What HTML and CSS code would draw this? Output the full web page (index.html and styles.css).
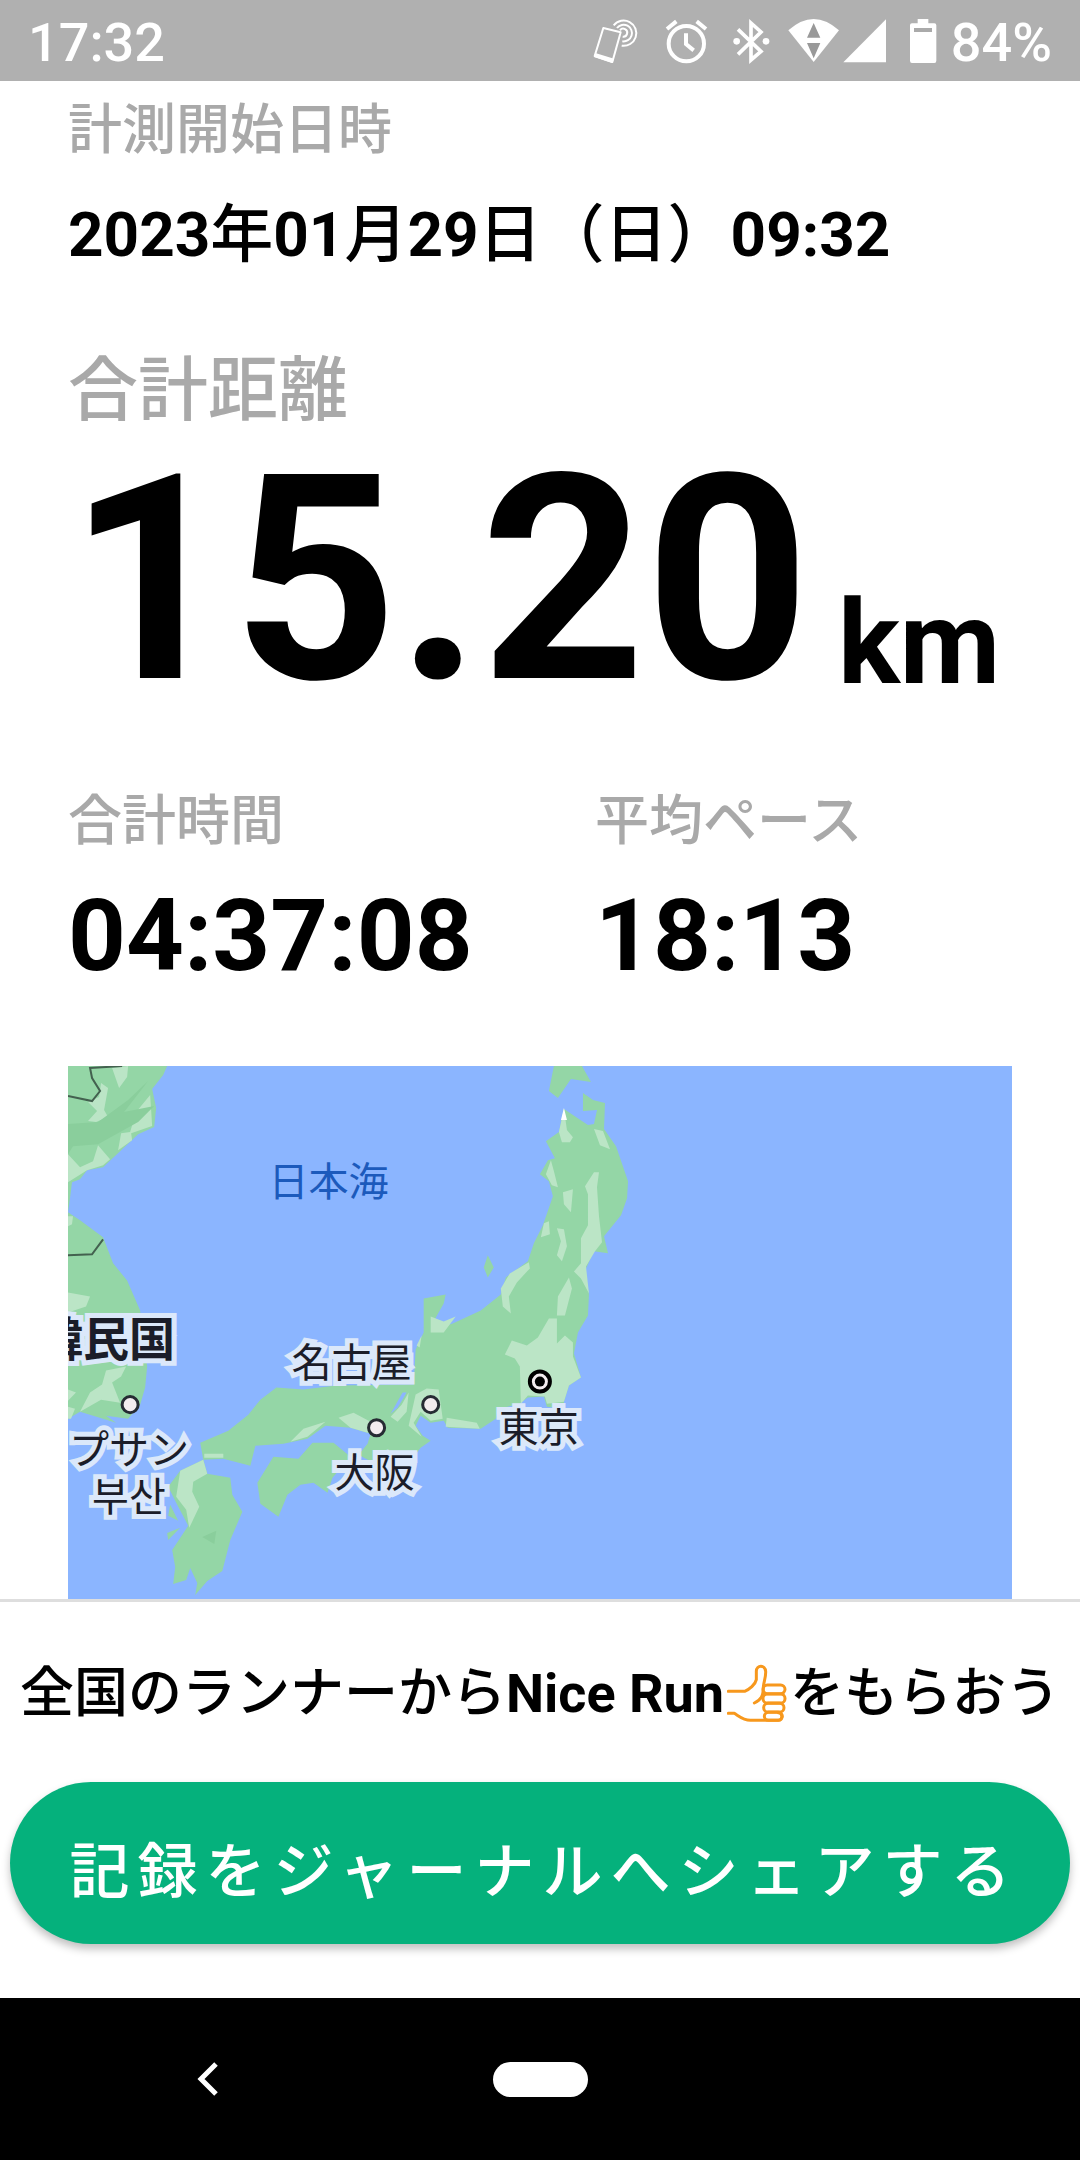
FILE: index.html
```html
<!DOCTYPE html>
<html lang="ja">
<head>
    <meta charset="UTF-8">
    <meta name="viewport" content="width=device-width, initial-scale=1.0">
    <title>計測結果</title>
    <link rel="stylesheet" href="styles.css">
</head>
<body>
    <header class="status">
        <span class="clock">17:32</span>
        <div class="status-icons">
            <!-- NFC -->
            <svg class="w60" viewBox="96 48 180 144">
                <g fill="none" stroke="#fff">
                    <path d="M133 81l52 13-25 89-53-18z" stroke-width="6" stroke-linejoin="round"/>
                    <path d="M164 73a38 38 0 1 1 24 61" stroke-width="6"/>
                    <path d="M174 81a25 25 0 1 1 16 40" stroke-width="6"/>
                    <path d="M183 88a12 12 0 1 1 8 19" stroke-width="6"/>
                </g>
                <path fill="#fff" d="M109 156l56 17-5 13-55-18z"/>
            </svg>
            <!-- アラーム -->
            <svg class="w68" viewBox="276 48 204 144">
                <g fill="none" stroke="#fff" stroke-width="12">
                    <circle cx="382" cy="128" r="53"/>
                    <path d="M324 84l28-23M441 84l-28-23M381 97v32l23 19"/>
                </g>
            </svg>
            <!-- Bluetooth -->
            <svg class="w64" viewBox="480 48 192 144">
                <path fill="none" stroke="#fff" stroke-width="11" d="M537 85l69 66-30 26V66l30 27-69 67"/>
                <circle cx="533" cy="121" r="10" fill="#fff"/>
                <circle cx="621" cy="121" r="10" fill="#fff"/>
            </svg>
            <!-- Wi-Fi -->
            <svg class="w58" viewBox="672 48 174 144">
                <path fill="#fff" d="M688 88q76-68 152 0l-76 95z"/>
                <path fill="#999" d="M764 66l20 44h-40zM744 126h40l-20 46z"/>
            </svg>
            <!-- 電波 -->
            <svg class="w50" viewBox="846 48 150 144">
                <path fill="#fff" d="M981 55v129H853z"/>
            </svg>
            <!-- バッテリー -->
            <svg class="w60" viewBox="996 48 180 144">
                <path fill="#fff" d="M1076 54h32v13h18q6 0 6 6v106q0 7-6 7h-67q-6 0-6-7V73q0-6 6-6h17z"/>
                <path fill="#aaa" d="M1065 81h54v12h-54z"/>
            </svg>
            <span class="battery">84%</span>
        </div>
    </header>

    <main class="result">
        <p class="label">計測開始日時</p>
        <p class="date">2023<span class="ja">年</span>01<span class="ja">月</span>29<span class="ja">日（日）</span>09:32</p>
        <h2 class="label label-lg">合計距離</h2>
        <p class="distance"><span class="num">15.20</span><span class="unit">km</span></p>
        <div class="stats">
            <div>
                <p class="label">合計時間</p>
                <p class="value">04:37:08</p>
            </div>
            <div>
                <p class="label">平均ペース</p>
                <p class="value">18:13</p>
            </div>
        </div>

        <svg class="map" viewBox="0 0 944 532" preserveAspectRatio="xMinYMin slice">
            <rect class="sea" width="944" height="532"/>
            <!-- 陸地 -->
            <g class="land">
                <path d="M0 0H99L95 9 84 23 88 42 86 61 70 68 52 85 35 101 19 104 12 113 4 116 2 132 0 146 12 154 35 171 45 197 59 214 72 244 79 300 77 321 72 338 60 352 38 349 48 356 12 345 0 352z"/>
                <path d="M132 376L160 364 180 348 192 333 208 321 235 323 268 319 345 318 347 283 355 266 355 232 377 228 375 237 366 253 371 261 384 257 412 244 432 228 437 211 459 195 465 177 474 159 484 130 480 115 471 108 479 94 486 92 477 75 490 66 495 43 504 49 519 59 525 58 528 44 514 45 514 27 524 34 536 37 535 63 547 80 559 115 558 132 552 149 535 170 539 187 525 185 516 204 520 228 519 249 509 266 505 287 512 311 500 319 495 335 495 342 478 340 475 330 459 331 449 338 429 342 427 352 412 362 379 361 375 354 362 356 352 349 347 359 354 369 362 374 352 381 345 390 312 400 290 388 299 377 302 367 282 361 257 359 239 372 215 377 187 379 182 399 155 392 135 393z"/>
                <path d="M189 416L205 390 230 392 244 376 265 376 282 390 264 411 259 426 245 416 232 418 219 428 210 450 192 437z"/>
                <path d="M112 404L135 393 139 407 162 411 164 428 174 445 162 473 154 504 139 514 127 528 129 516 122 501 118 513 105 517 107 500 104 483 120 459 109 438 100 420z"/>
                <path d="M99 466L112 461 100 473zM102 438L110 454 100 449zM419 189L425 201 419 211 415 201zM485 0L480 25 489 32 502 13 522 16 513 0z"/>
            </g>
            <!-- 平野 -->
            <g class="plain">
                <path d="M44 2L60 0 59 11 51 22zM33 17L40 22 36 44 40 51 28 56 20 55 29 45 20 36 31 31zM82 29L84 60 63 67 64 74 50 84 53 67 62 66 68 46zM0 88L12 101 25 95 30 79 42 93 35 99 19 104 0 116zM0 150l5 0-1 8-4 2zM0 226L22 230 18 240 0 246zM38 304L58 300 53 310 44 316 52 336 33 333 12 345 22 326 34 318zM0 323l8 3-8 8zM0 340l7 2-4 10-3 0z"/>
                <path d="M112 404L135 393 139 407 125 415 124 425 131 440 121 461 118 443 108 430zM136 387L155 387 155 391 136 391zM222 375L235 362 257 355 239 370zM270 351L285 346 302 355 299 366 282 361zM322 350L333 338 340 326 338 345 329 355zM347 328L358 322 370 323 374 352 362 354 352 345 345 356 353 370 340 359zM378 351L408 356 411 362 377 360z"/>
                <path d="M362 250L375 255 387 250 375 266 362 266zM348 279l5-10-2 12zM460 196L461 202 448 216 440 230 442 247 434 240 432 222 441 207zM495 43L498 64 504 71 501 76 493 76 490 66zM525 63L534 65 541 83 531 79zM482 94L485 105 489 121 483 119 477 108zM525 106L530 106 528 121 530 150 533 176 526 185 517 200 520 227 512 212 505 205 512 197 512 172 519 159 519 128 516 120zM494 126L504 123 502 146 495 138zM475 157L480 155 481 168 472 171zM488 162L495 163 498 180 493 195 488 189 492 175zM500 211L503 222 496 249 488 249 489 230zM480 252L488 252 488 277 496 269 504 276 504 290 512 311 500 319 495 335 478 337 476 330 459 329 452 337 451 300 446 292 436 288 443 274 458 279 469 271z"/>
            </g>
            <g class="hill">
                <path d="M80 15L56 46 86 40 70 56 30 78 5 80 0 88V58L30 56 60 34zM134 470l14-6-2 13z"/>
            </g>
            <path fill="#fff" d="M495 42l3 12h-6z"/>
            <path class="sea" d="M322 347L334 326 338 326 329 341z"/>
            <path class="border" d="M0 30L24 35 32 25 24 12 22 2 54 0M0 189L24 188 35 173"/>
            <!-- 都市 -->
            <g class="city">
                <circle cx="62" cy="338" r="8"/>
                <circle cx="362" cy="338" r="8"/>
                <circle cx="308" cy="361" r="8"/>
                <circle cx="471" cy="315" r="10" class="capital"/>
            </g>
            <circle cx="471" cy="315" r="5"/>
            <text class="sea-name" x="200" y="130">日本海</text>
            <g class="place">
                <text class="country" x="107" y="289" text-anchor="end">大韓民国</text>
                <text x="1" y="397">プサン</text>
                <text class="ko" x="24" y="444">부산</text>
                <text x="223" y="310">名古屋</text>
                <text x="266" y="420">大阪</text>
                <text x="430" y="375">東京</text>
            </g>
        </svg>
    </main>

    <footer class="share">
        <p class="message"><span class="ja">全国のランナーから</span>Nice Run<svg class="thumb" viewBox="138 74 180 180">
                <g fill="none" stroke="#f7981d" stroke-width="9" stroke-linecap="round" stroke-linejoin="round">
                    <path d="M142 156h49c14-6 32-20 35-35V96c0-20 27-20 28 0 1 18-6 32-7 47 0 27-7 39-27 48"/>
                    <path d="M142 222h18c16 10 28 21 48 21h84c14 0 14-23 0-23"/>
                    <rect x="246" y="137" width="66" height="26" rx="13"/>
                    <rect x="246" y="164" width="66" height="27" rx="13"/>
                    <rect x="248" y="192" width="61" height="26" rx="13"/>
                    <rect x="250" y="219" width="54" height="24" rx="12"/>
                </g>
            </svg><span class="ja">をもらおう</span></p>
        <button type="button" class="share-btn">記録をジャーナルへシェアする</button>
    </footer>

    <nav class="navbar">
        <button type="button" class="back" aria-label="戻る">
            <svg viewBox="0 0 24 36"><path d="M20 3L5 18l15 15" fill="none" stroke="#fff" stroke-width="5"/></svg>
        </button>
        <button type="button" class="home" aria-label="ホーム"></button>
    </nav>
</body>
</html>
```
FILE: styles.css
```css
* {
    box-sizing: border-box;
}
body {
    margin: 0;
    min-height: 100vh;
    display: flex;
    flex-direction: column;
    background: #fff;
    color: #000;
    font-family: Roboto, "Noto Sans CJK JP", sans-serif;
}
p, h2 {
    margin: 0;
}
button {
    border: 0;
    padding: 0;
    font-family: inherit;
}
svg {
    display: block;
}

/* ステータスバー */
.status {
    height: 81px;
    padding: 0 28px;
    display: flex;
    align-items: center;
    justify-content: space-between;
    background: #b0b0b0;
    color: #fff;
    font-size: 54px;
    font-weight: 500;
    line-height: 72px;
}
.clock, .battery {
    padding-top: 4px;
}
.status-icons {
    display: flex;
    align-items: center;
}
.status-icons svg {
    height: 48px;
}
.w50 { width: 50px; }
.w58 { width: 58px; }
.w60 { width: 60px; }
.w64 { width: 64px; }
.w68 { width: 68px; }

/* 計測結果 */
.result {
    flex: 1;
    display: flex;
    flex-direction: column;
    padding: 18px 68px 0;
}
.label {
    color: #a9a9a9;
    font-size: 54px;
    font-weight: 500;
    line-height: 64px;
}
.label-lg {
    margin-top: 80px;
    font-size: 70px;
    line-height: 80px;
}
.date {
    margin-top: 36px;
    font-size: 62px;
    font-weight: 700;
    line-height: 72px;
}
.ja {
    font-weight: 500;
}
.date .ja {
    font-size: 63px;
}
.distance {
    margin-top: 29px;
    display: flex;
    align-items: flex-end;
    gap: 28px;
    font-weight: 700;
}
.num {
    font-size: 287px;
    line-height: 240px;
}
.unit {
    font-size: 116px;
    line-height: 114px;
}
.stats {
    margin: 90px 0 74px;
    display: grid;
    grid-template-columns: 1fr 1fr;
    column-gap: 110px;
}
.value {
    margin-top: 26px;
    font-size: 101px;
    font-weight: 700;
    line-height: 112px;
}

/* 地図 */
.map {
    flex: 1;
    width: 100%;
    min-height: 400px;
}
.sea { fill: #8bb5ff; }
.land { fill: #94d6a6; }
.plain { fill: #bbe5c6; }
.hill { fill: #8ace9c; }
.border {
    fill: none;
    stroke: #43614f;
    stroke-width: 2;
}
.city {
    fill: #f3ecef;
    stroke: #262b33;
    stroke-width: 3;
}
.capital {
    stroke: #000;
    stroke-width: 4;
}
.sea-name {
    fill: #1c5abc;
    font-size: 40px;
}
.place {
    fill: #1b1d29;
    stroke: #dbe8fa;
    stroke-width: 10;
    paint-order: stroke;
    font-size: 40px;
}
.country {
    font-size: 46px;
    font-weight: 700;
}
.ko {
    font-family: "Noto Sans CJK KR", sans-serif;
}

/* シェア */
.share {
    padding: 56px 10px 54px;
    border-top: 3px solid #dedede;
}
.message {
    display: flex;
    justify-content: center;
    align-items: center;
    font-size: 54px;
    font-weight: 700;
    line-height: 72px;
    white-space: pre;
}
.thumb {
    width: 60px;
    height: 60px;
    margin: 0 3px;
}
.share-btn {
    display: block;
    width: 100%;
    height: 162px;
    margin-top: 52px;
    padding: 6px 0 0 8px;
    border-radius: 81px;
    background: #05b17c;
    box-shadow: 0 5px 9px rgba(0, 0, 0, .25);
    color: #fff;
    font-size: 60px;
    font-weight: 500;
    letter-spacing: 8px;
    white-space: nowrap;
}

/* ナビゲーションバー */
.navbar {
    height: 162px;
    display: grid;
    grid-template-columns: 1fr 95px 1fr;
    align-items: center;
    background: #000;
}
.back {
    justify-self: start;
    width: 120px;
    height: 120px;
    margin-left: 148px;
    background: none;
}
.back svg {
    width: 24px;
    height: 36px;
    margin: 0 auto;
}
.home {
    height: 35px;
    border-radius: 18px;
    background: #fff;
}
```
